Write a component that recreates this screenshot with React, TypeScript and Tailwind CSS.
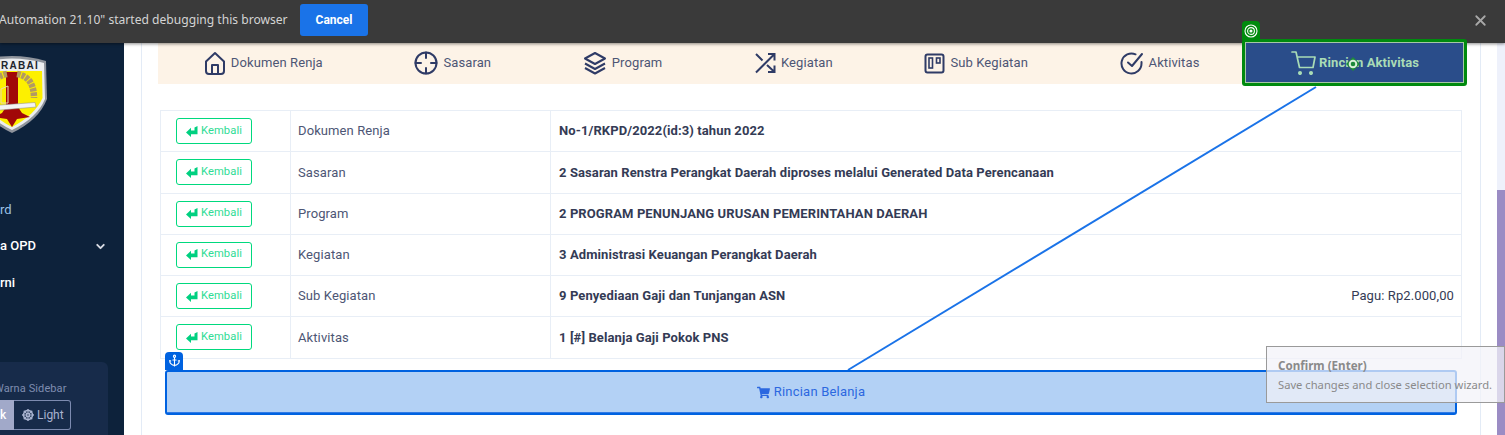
import React from "react";
import { Anchor, ChevronDown, X } from "lucide-react";
import { FaDharmachakra, FaShoppingCart } from "react-icons/fa";

const font = "font-['Roboto',sans-serif]";

const iconProps = {
  fill: "none",
  stroke: "currentColor",
  strokeWidth: 2,
  strokeLinecap: "round" as const,
  strokeLinejoin: "round" as const,
};

const HomeIcon = () => (
  <svg width="22" height="24" viewBox="0 0 22 24" {...iconProps}>
    <path d="M2 10.500 11 2l9 8.500V20a3 3 0 0 1-3 3H5a3 3 0 0 1-3-3z" />
    <path d="M8 23v-9h6v9" />
  </svg>
);

const TargetIcon = () => (
  <svg width="24" height="24" viewBox="0 0 24 24" {...iconProps}>
    <circle cx="12" cy="12" r="10.500" />
    <path d="M12 1.500V7M12 17v5.500M1.500 12H7M17 12h5.500" />
  </svg>
);

const LayersIcon = () => (
  <svg width="24" height="24" viewBox="0 0 24 24" {...iconProps} strokeLinecap="butt">
    <path d="M12 2 2 7.500 12 13l10-5.500z" />
    <path d="M2 12.500 12 18l10-5.500" />
    <path d="M2 17 12 22.500 22 17" />
  </svg>
);

const ShuffleIcon = () => (
  <svg width="22" height="22" viewBox="0 0 22 22" {...iconProps} strokeLinecap="butt" strokeLinejoin="miter">
    <path d="M14 2h6.500v6.500M20.500 2 2 20.500" />
    <path d="M20.500 13.500V20H14M2 2l6.500 6.500M13 13l7.500 7" />
  </svg>
);

const BoardIcon = () => (
  <svg width="21" height="21" viewBox="0 0 21 21" {...iconProps}>
    <rect x="1.500" y="1.500" width="18" height="18" rx="2" />
    <rect x="5" y="5" width="3.500" height="10" strokeWidth="1.600" strokeLinecap="butt" strokeLinejoin="miter" />
    <rect x="12.500" y="5" width="3.500" height="5" strokeWidth="1.600" strokeLinecap="butt" strokeLinejoin="miter" />
  </svg>
);

const CheckCircleIcon = () => (
  <svg width="24" height="24" viewBox="0 0 24 24" {...iconProps}>
    <path d="M21.500 11v1.500a10 10 0 1 1-6-9.200" />
    <path d="m8 11.500 4 3.500 10-12" />
  </svg>
);

const CartIcon = () => (
  <svg width="25" height="24" viewBox="0 0 25 24" {...iconProps} strokeWidth={1.700}>
    <path d="M1 1h4l3.500 15.500h13.500L24 6H6.500" />
    <circle cx="9" cy="22" r="1.200" fill="currentColor" />
    <circle cx="20" cy="22" r="1.200" fill="currentColor" />
  </svg>
);

const ReturnIcon = () => (
  <svg width="12" height="11" viewBox="0 0 12 11" fill="#00d080">
    <path d="M0 6.500 5 1.800V4.600H8.500V1.500L11.500 0V8.200H5V11Z" />
  </svg>
);

const TagTarget = () => (
  <svg width="14" height="14" viewBox="0 0 14 14" fill="none" stroke="#ffffff" strokeWidth="1.100">
    <circle cx="7" cy="7" r="6" />
    <circle cx="7" cy="7" r="3.400" />
    <circle cx="7" cy="7" r="1" fill="#ffffff" />
  </svg>
);

const Shield = () => (
  <svg width="70" height="78" viewBox="0 0 70 78" className="-ml-[23px] mt-3 shrink-0">
    <path d="M1 6Q35-4 69 6L70 44Q62 65 35 78 8 65 0 44Z" fill="#8f949c" />
    <path d="M3 8Q35-1 67 8L68 44Q60 63 35 75 10 63 2 44Z" fill="#eceef0" />
    <path d="M5 16H65L65.500 43Q58 60 35 72 12 60 4.500 43Z" fill="#fdf000" />
    <path d="M29 17H41V50H29Z" fill="#a10808" />
    <path d="M29 52H41L45 58 53 62 40 64 35 72 30 64 17 62 25 58Z" fill="#a10808" />
    <path d="M40 19Q57 22 57 43" fill="none" stroke="#b39a62" strokeWidth="6.500" strokeDasharray="3.500 1" />
    <path d="M30 19Q13 22 13 43" fill="none" stroke="#b39a62" strokeWidth="6.500" strokeDasharray="3.500 1" />
    <path d="M24 34 31 31V48H24Z" fill="none" stroke="#e7d9b0" strokeWidth="1" />
    <path d="M10 51 58 47.500 59 52 12 56Z" fill="#f4f4f4" stroke="#888888" strokeWidth="0.500" />
    <text x="24" y="13.500" fontSize="10" fontWeight="700" fill="#20242c" letterSpacing="1.300" fontFamily="Liberation Sans, sans-serif">RABAI</text>
  </svg>
);

const tabs = [
  { icon: <HomeIcon />, label: "Dokumen Renja" },
  { icon: <TargetIcon />, label: "Sasaran" },
  { icon: <LayersIcon />, label: "Program" },
  { icon: <ShuffleIcon />, label: "Kegiatan" },
  { icon: <BoardIcon />, label: "Sub Kegiatan" },
  { icon: <CheckCircleIcon />, label: "Aktivitas" },
];

const rows = [
  { name: "Dokumen Renja", value: "No-1/RKPD/2022(id:3) tahun 2022" },
  { name: "Sasaran", value: "2 Sasaran Renstra Perangkat Daerah diproses melalui Generated Data Perencanaan" },
  { name: "Program", value: "2 PROGRAM PENUNJANG URUSAN PEMERINTAHAN DAERAH" },
  { name: "Kegiatan", value: "3 Administrasi Keuangan Perangkat Daerah" },
  { name: "Sub Kegiatan", value: "9 Penyediaan Gaji dan Tunjangan ASN", pagu: "Pagu: Rp2.000,00" },
  { name: "Aktivitas", value: "1 [#] Belanja Gaji Pokok PNS" },
];

export default function App() {
  return (
    <div className={`${font} relative flex h-[435px] w-[1505px] flex-col overflow-hidden bg-white`}>
      {/* debugging bar */}
      <div className="relative z-10 flex h-[43px] shrink-0 items-center bg-[#3a3a3a] pb-[3px] shadow-[0_1px_3px_rgba(0,0,0,0.45)]">
        <span className="-ml-px w-[289px] shrink-0 whitespace-nowrap font-['Noto_Sans',sans-serif] text-[12.100px] text-[#d4d4d4]">
          Automation 21.10" started debugging this browser
        </span>
        <button className="ml-3 h-8 w-[68px] rounded-[3px] bg-[#1a73e8] text-[12px] font-bold text-white">Cancel</button>
        <X className="ml-auto mr-4 text-[#a8a8a8]" size={17} strokeWidth={2.500} />
      </div>

      <div className="flex min-h-0 flex-1">
        {/* sidebar */}
        <aside className="flex w-[124px] shrink-0 flex-col overflow-hidden bg-[#0d223b]">
          <Shield />
          <div className="mt-[69px] text-[13px] leading-4 text-[#9cc2e6]">rd</div>
          <div className="mt-5 flex h-4 items-center justify-between pr-[17px] text-[13px] font-medium leading-4 text-white">
            <span>a OPD</span>
            <ChevronDown size={13} strokeWidth={3.500} className="text-[#d8dce4]" />
          </div>
          <div className="mt-[21px] text-[13px] font-medium leading-4 text-white">rni</div>
          <div className="mt-[71px] mr-4 flex-1 rounded-tr-md bg-[#172b4a] pt-[19px]">
            <div className="-ml-[6px] whitespace-nowrap text-[11px] leading-4 tracking-[0.1px] text-[#7f8db0]">Warna Sidebar</div>
            <div className="mt-[3px] flex h-[30px] w-[71px] text-[12px]">
              <span className="flex w-[14px] items-center bg-[#a1a9c9] font-medium text-white">k</span>
              <span className="flex flex-1 items-center gap-[3px] rounded-r-[3px] border border-l-0 border-[#7d8bb0] pl-2 text-[#a9b3d0]">
                <FaDharmachakra size={12} />
                Light
              </span>
            </div>
          </div>
        </aside>

        {/* content */}
        <main className="flex min-w-0 flex-1">
          <div className="ml-[17px] w-[1340px] shrink-0 border-x border-[#e3ebf6] px-4">
            <nav className="flex h-[41px] w-[1307px] items-center justify-around bg-[#fdf3e7] text-[13px] tracking-[0.1px] text-[#4d5675]">
              {tabs.map((tab) => (
                <div key={tab.label} className="flex items-center gap-[5px] pb-px">
                  <span className="text-[#2f3b66]">{tab.icon}</span>
                  <span className="pb-px">{tab.label}</span>
                </div>
              ))}
              <div className="relative z-20 flex items-center gap-[3px] pb-px text-[#a9dcb6]">
                <div className="absolute -left-[49px] -top-[12px] h-[47px] w-[225px] rounded-[3px] border-[3px] border-[#008a0e] bg-[#2a4d8a] outline outline-1 -outline-offset-[4px] outline-[#a6c6a6]" />
                <div className="absolute -left-[49px] -top-[30px] flex h-[19px] w-[18px] items-center justify-center rounded-t-[4px] bg-[#008a0e]">
                  <TagTarget />
                </div>
                <span className="relative">
                  <CartIcon />
                </span>
                <span className="relative pb-px font-bold">Rincian Aktivitas</span>
                {/* drag handle */}
                <svg width="14" height="14" viewBox="0 0 14 14" className="absolute left-[55px] top-[6px]">
                  <path d="M7 0 14 7 7 14 0 7Z" fill="#1d8a3a" />
                  <circle cx="7" cy="7" r="3.300" fill="none" stroke="#d9efd9" strokeWidth="2" />
                </svg>
              </div>
            </nav>

            <table className="mt-[26px] ml-[2px] w-[1302px] table-fixed border-collapse text-[13px] tracking-[0.1px] text-[#4d5675]">
              <colgroup>
                <col className="w-[130px]" />
                <col className="w-[260px]" />
                <col />
              </colgroup>
              <tbody>
                {rows.map((row) => (
                  <tr key={row.name} className="h-[41.250px]">
                    <td className="border border-[#e8eef6] pl-[15px]">
                      <button className="flex h-[26px] w-[76px] items-center justify-center gap-[3px] rounded-[3px] border border-[#00d97e] text-[11.200px] text-[#2fdc95]">
                        <ReturnIcon />
                        Kembali
                      </button>
                    </td>
                    <td className="border border-[#e8eef6] pl-[7px]">{row.name}</td>
                    <td className="border border-[#e8eef6] pl-2 pr-[7px]">
                      <div className="flex items-center justify-between">
                        <span className="font-bold text-[#343b55]">{row.value}</span>
                        {row.pagu && <span className="text-[#343b55]">{row.pagu}</span>}
                      </div>
                    </td>
                  </tr>
                ))}
              </tbody>
            </table>

            <div className="relative z-[5] mt-[11px] ml-[7px] h-[45px] w-[1292px]">
              <button className="flex h-full w-full items-center justify-center gap-1 rounded-[3px] border-2 border-[#0062e0] bg-[#b3d1f5] text-[13px] tracking-[0.2px] text-[#2c68e0]">
                <FaShoppingCart size={13} />
                Rincian Belanja
              </button>
              <div className="absolute bottom-[2px] left-[2px] right-[2px] h-px bg-[#2f7ae6]" />
              <div className="absolute -top-[18px] left-0 flex h-[18px] w-[18px] items-center justify-center rounded-t-[4px] bg-[#0062e0]">
                <Anchor size={13} color="#ffffff" strokeWidth={2} />
              </div>
            </div>
          </div>

          {/* scrollbar */}
          <div className="ml-[16px] flex w-2 flex-col bg-[#eef1fb]">
            <div className="mt-[147px] flex-1 bg-[#9b8cc4]" />
          </div>
        </main>
      </div>

      {/* link between the two selections */}
      <svg className="pointer-events-none absolute inset-0 z-[4]" width="1505" height="435">
        <line x1="1316" y1="87" x2="848" y2="370" stroke="#1a73e8" strokeWidth="2" />
      </svg>

      {/* tooltip */}
      <div className="absolute left-[1266px] top-[346px] z-30 h-[57px] w-[239px] border border-[#9a9a9a] bg-[rgba(242,242,248,0.72)] pl-[11px] pt-[11px] font-['Noto_Sans',sans-serif] leading-4 text-[#8a8a8a]">
        <div className="text-[11.600px] font-bold">Confirm (Enter)</div>
        <div className="mt-[3px] whitespace-nowrap text-[11.200px]">Save changes and close selection wizard.</div>
      </div>
    </div>
  );
}
